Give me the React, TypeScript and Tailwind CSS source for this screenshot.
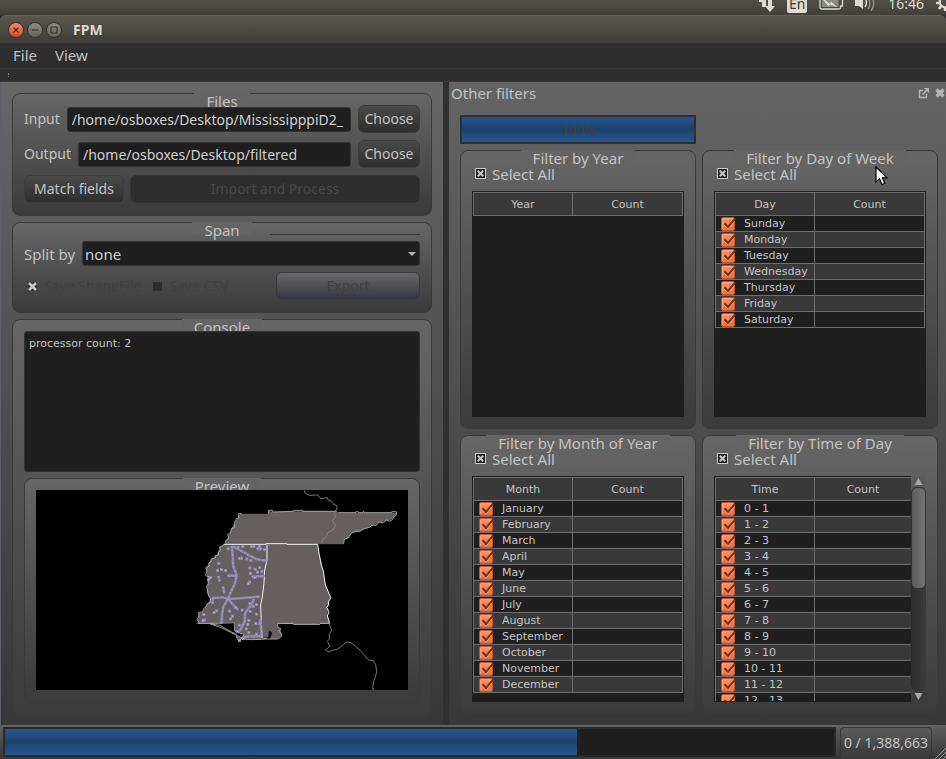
import React, { useId } from "react";
import type { ReactNode } from "react";

const DAYS = ["Sunday", "Monday", "Tuesday", "Wednesday", "Thursday", "Friday", "Saturday"];
const MONTHS = [
  "January", "February", "March", "April", "May", "June",
  "July", "August", "September", "October", "November", "December",
];
const HOURS = Array.from({ length: 13 }, (_, h) => `${h} - ${h + 1}`);

function Group({ title, className = "", children }: { title: string; className?: string; children: ReactNode }) {
  const id = useId();
  return (
    <section
      aria-labelledby={id}
      className={`flex min-w-0 flex-col rounded-lg border border-[#3a3a3a] bg-linear-to-b from-[#666666] to-[#3b3b3b] px-[11px] ${className}`}
    >
      <h2 id={id} className="-mt-px h-3 self-center bg-[#646464] px-3 text-[15px] leading-[17px] whitespace-nowrap">
        {title}
      </h2>
      {children}
    </section>
  );
}

const fieldClass =
  "h-[25px] min-w-0 flex-1 rounded-[3px] border border-[#343434] bg-[#1f1f1f] px-1 text-sm text-[#cfcfcf] outline-none";

function Button({ children, className = "", disabled = false }: { children: ReactNode; className?: string; disabled?: boolean }) {
  return (
    <button
      type="button"
      disabled={disabled}
      className={`h-7 rounded-md border text-sm leading-5 whitespace-nowrap ${className}`}
    >
      {children}
    </button>
  );
}

const raised = "border-[#3d3d3d] bg-linear-to-b from-[#4a4a48] to-[#2e2e2e]";

function PathRow({ label, value }: { label: string; value: string }) {
  const id = useId();
  return (
    <div className="flex h-7 items-center">
      <label htmlFor={id} className="mr-[7px] text-sm">{label}</label>
      <input id={id} type="text" defaultValue={value} className={fieldClass} />
      <Button className={`ml-[7px] w-[62px] ${raised}`}>Choose</Button>
    </div>
  );
}

function CrossMark({ className }: { className: string }) {
  return (
    <svg viewBox="0 0 9 9" className={`pointer-events-none [grid-area:1/1] ${className}`} aria-hidden="true">
      <path d="M1 1 L8 8 M8 1 L1 8" stroke="currentColor" strokeWidth="2.6" />
    </svg>
  );
}

function SelectAll() {
  return (
    <label className="flex h-[23px] items-center gap-[6px] pl-[3px] text-[15px] leading-4">
      <span className="grid place-items-center">
        <input
          type="checkbox"
          defaultChecked
          className="size-[11px] appearance-none border border-[#c8c8c8] bg-[#222222] [grid-area:1/1]"
        />
        <CrossMark className="size-[7px] text-[#c8c8c8]" />
      </span>
      Select All
    </label>
  );
}

function RowCheck({ label }: { label: string }) {
  return (
    <label className="flex h-[15px] items-center gap-[7px] pl-[5px]">
      <span className="grid items-center">
        <input
          type="checkbox"
          defaultChecked
          className="size-[14px] appearance-none rounded-[2px] border border-[#c9502a] bg-linear-to-b from-[#fb9166] to-[#ee6d3d] [grid-area:1/1]"
        />
        <svg viewBox="0 0 16 14" className="pointer-events-none h-[14px] w-4 [grid-area:1/1]" aria-hidden="true">
          <path d="M1.8 12.2V1.8H12" fill="none" stroke="#ffb08c" strokeWidth="0.8" />
          <path d="M3.4 7.8 L7 11.6 L13 4.6" fill="none" stroke="#ffc9ae" strokeWidth="1" />
          <path d="M3.4 6.2 L7 10 L14.2 1.6" fill="none" stroke="#74301a" strokeWidth="2" />
        </svg>
      </span>
      {label}
    </label>
  );
}

function FilterTable({ heading, rows, scroll = false }: { heading: string; rows: string[]; scroll?: boolean }) {
  return (
    <div className="mt-[6px] flex h-[226px]">
      <div className={`min-w-0 flex-1 overflow-hidden border border-[#1f1f1f] bg-[#1f1f1f] ${scroll ? "border-r-0" : ""}`}>
        <table className="w-full table-fixed border-collapse font-['DejaVu_Sans',sans-serif] text-[11px] leading-[15px] text-[#c4c4c4]">
          <colgroup>
            <col className="w-[99px]" />
            <col />
          </colgroup>
          <thead>
            <tr className="h-[23px] bg-[#393939]">
              <th className="border border-[#6e6e6e] p-0 font-normal">{heading}</th>
              <th className={`border border-[#6e6e6e] p-0 font-normal ${scroll ? "border-r-0" : ""}`}>Count</th>
            </tr>
          </thead>
          <tbody>
            {rows.map((row) => (
              <tr key={row} className="h-4 odd:bg-[#1f1f1f] even:bg-[#393939]">
                <td className="border border-[#6e6e6e] p-0"><RowCheck label={row} /></td>
                <td className={`border border-[#6e6e6e] p-0 ${scroll ? "border-r-0" : ""}`} />
              </tr>
            ))}
          </tbody>
        </table>
      </div>
      {scroll && (
        <div className="flex w-[15px] flex-col items-center bg-linear-to-b from-[#5c5c5c] to-[#3c3c3c]">
          <svg viewBox="0 0 15 11" className="h-[11px] w-full" aria-hidden="true"><path d="M3.5 9 L7.5 2 L11.5 9Z" fill="#a5a5a5" /></svg>
          <div className="flex w-full flex-1 flex-col rounded-md bg-linear-to-r from-[#2c2c2c] to-[#3c3c3c]">
            <div className="h-[102px] rounded-md border border-[#333333] bg-linear-to-r from-[#5c5c5c] to-[#747474]" />
          </div>
          <svg viewBox="0 0 15 11" className="h-[11px] w-full" aria-hidden="true"><path d="M3.5 2 L7.5 9 L11.5 2Z" fill="#a5a5a5" /></svg>
        </div>
      )}
    </div>
  );
}

function Filter({ title, heading, rows, scroll }: { title: string; heading: string; rows: string[]; scroll?: boolean }) {
  return (
    <Group title={title} className="pb-[11px]">
      <SelectAll />
      <FilterTable heading={heading} rows={rows} scroll={scroll} />
    </Group>
  );
}

const ROADS = [
  "M155 228 L158 255 L160 290 L170 315 L165 340 L153 365 L145 385 L130 410 L126 435 L124 462",
  "M160 230 L180 240 L205 255 L230 268 L262 273",
  "M98 384 L130 382 L145 387 L190 384 L240 380",
  "M145 387 L160 405 L175 420",
  "M222 388 L210 410 L196 428 L194 455 L178 485",
  "M142 317 L172 317", "M98 384 L98 402", "M115 318 L119 334", "M129 350 L133 370",
  "M215 320 L255 318", "M188 500 L245 498", "M241 448 L245 495",
];
const TOWNS = [
  [116, 280], [112, 301], [124, 298], [136, 301], [91, 322], [86, 328], [144, 236], [178, 265], [184, 264], [200, 266],
  [209, 293], [211, 310], [208, 336], [205, 340], [225, 297], [232, 306], [245, 304], [239, 292], [224, 322], [214, 229],
  [221, 229], [238, 229], [236, 237], [241, 236], [253, 238], [233, 235], [71, 433], [73, 449], [69, 451], [102, 427],
  [109, 422], [148, 423], [157, 438], [151, 446], [166, 412], [229, 403], [219, 409], [229, 432], [210, 424], [206, 451],
  [227, 460], [239, 459], [177, 465], [172, 484], [198, 476], [206, 487], [203, 463], [222, 498], [229, 492], [178, 511],
  [190, 505], [186, 420], [209, 400], [212, 271], [174, 232], [188, 229],
];

function MapPreview() {
  return (
    <svg viewBox="0 0 372 200" preserveAspectRatio="xMidYMid slice" className="h-[200px] w-full bg-black" role="img" aria-label="Map preview">
      <g transform="translate(144 -20) scale(0.33333)" fill="none" stroke="#b8b8b8" strokeWidth="3">
        <path fill="#655f5f" stroke="none" d="M180 131 H265 V122 L278 126 L340 124 H470 L475 128 H649 L647 138 L632 150 L596 158 L570 170 L540 184 L514 190 L506 203 L491 211 V223 H413 L420 260 L430 300 L437 345 L452 382 L443 412 L443 435 L449 460 L390 463 L340 463 L292 460 L292 470 L302 479 L305 497 L293 507 L270 508 L276 488 L268 482 L265 500 L248 505 L242 509 L200 508 L172 506 L163 481 L165 460 H53 L56 430 L68 426 L80 405 L91 388 L80 370 L83 330 L78 295 L92 270 L110 255 L120 230 L135 222 L146 195 L155 175 L168 153Z" />
        <path strokeWidth="2.5" d="M185 131 H175 L176 144 L168 146 L168 153 L163 156 L163 173 L155 175 L152 188 L143 193 L147 206 L138 211 L135 220 M265 131 V121 H278 V126 L340 124 V121 H368 V124 H470 M475 128 H528 V125 H535 V128 H549 V125 H552 V128 H635 V125 H649 V136 L642 140 L638 149 L628 154 L620 149 L610 159 L596 156 L590 165 L574 167 L569 172 L550 177 L540 184 L528 183 L514 190 L505 203 L493 208 L491 221" />
        <path stroke="#f2f2f2" d="M130 223 H258 V221 H321 V223 H413 L417 250 L425 290 L430 303 L436 345 L448 373 L453 384 L445 395 L446 405 L440 412 L447 426 L442 438 L449 460 M261 224 V270 L254 300 L252 340 L247 380 L242 405 L244 460 L246 504" />
        <path strokeWidth="2.5" d="M131 226 L119 231 L122 241 L115 246 L116 255 L105 257 L106 264 L93 267 L94 274 L86 280 L88 288 L77 293 L81 302 L77 317 L88 321 L83 329 L87 340 L80 348 L82 360 L87 378 L92 386 L90 399 L81 401 L78 411 L71 416 L68 425 L55 428 L58 438 L51 448 L57 458" />
        <path d="M52 460 H165 M292 460 H340 M340 463 H420 M420 460 H450" />
        <path fill="#000" strokeWidth="2.5" d="M90 462 L126 474 L170 496 L188 505 L192 493 L172 487 L163 482 L163 460" />
        <path strokeWidth="2.5" d="M94 462 L120 466 L155 486 L170 493 M168 498 L174 510 L185 506 L210 509 L245 508 L262 504 M248 507 H293 L304 500 V492 L296 482 L303 477 L293 471 V460" />
        <path stroke="#8d8d8d" strokeWidth="2.5" d="M373 61 L375 69 L387 76 L413 75 L423 87 L441 82 L444 90 L454 93 L459 101 L471 108 L471 117 L463 127 L467 142 L456 152 L466 164 L464 175 L452 184 L443 188 L438 202 L430 206 L424 220" />
        <path stroke="#8d8d8d" strokeWidth="2.5" d="M449 460 L449 466 L455 480 L448 493 L448 507 L442 514 L450 528 L442 536 L437 539 L445 546 L457 541 L472 538 L490 524 L500 516 L513 518 L527 529 L540 540 L551 553 L565 570 L580 572 L587 584 L590 604 L587 619 L581 634 L578 652 L581 662" />
        {ROADS.map((d) => <path key={d} d={d} stroke="#9088b4" strokeWidth="8" strokeDasharray="11 1" />)}
        {ROADS.map((d) => <path key={d} d={d} stroke="#b5aedd" strokeWidth="3" strokeDasharray="3 9" />)}
        {TOWNS.map(([x, y]) => (
          <g key={`${x}-${y}`} stroke="none">
            <rect x={x - 4} y={y - 4} width="9" height="9" fill="#9088b4" />
            <rect x={x - 1} y={y - 1} width="3" height="3" fill="#bdb6e6" />
          </g>
        ))}
      </g>
    </svg>
  );
}

function SystemBar() {
  return (
    <header className="flex h-[15px] items-start justify-end overflow-hidden bg-linear-to-b from-[#504f49] to-[#403f3a] text-[#dfdbd2]">
      <svg viewBox="0 0 16 12" className="mr-3 h-3 w-4" aria-hidden="true">
        <path d="M3 0H7V7H3Z M0 0H3V2H0Z M9 0H13V6H16L11 12L6 6H9Z" fill="currentColor" />
      </svg>
      <span className="mr-3 h-[13px] w-5 overflow-hidden rounded-b-[2px] bg-[#dfdbd2] text-center text-sm leading-[7px] text-[#3c3b37]">En</span>
      <svg viewBox="0 0 25 10" className="mr-[11px] h-[10px] w-[25px]" aria-hidden="true">
        <path d="M1 0V7.5Q1 9 2.5 9H20Q21.5 9 21.5 7.5V6H23.5V0" fill="none" stroke="currentColor" strokeWidth="1.3" />
        <path d="M3 0H19.5V7H3Z" fill="#8b8983" />
        <path d="M6 0L11 4L12 1.5L18 7L11 4.5L10 6.5L4 0Z" fill="currentColor" />
      </svg>
      <svg viewBox="0 0 21 12" className="mr-3 h-3 w-[21px]" aria-hidden="true">
        <path d="M0 0H4L8 0V9L4 6H0Z" fill="currentColor" />
        <path d="M10 7Q12 4 11 0" fill="none" stroke="currentColor" strokeWidth="1.5" />
        <path d="M13 9Q16 5 14 0 M16 11Q20 6 18 0" fill="none" stroke="#8f8d86" strokeWidth="1.4" />
      </svg>
      <span className="mr-3 text-sm leading-[7px]">16:46</span>
      <svg viewBox="0 0 10 12" className="h-3 w-[10px]" aria-hidden="true">
        <path d="M4 0Q3 7 10 7.5" fill="none" stroke="currentColor" strokeWidth="2.4" />
        <path d="M0 3H3 M3 9L5 6 M9 11V8" stroke="currentColor" strokeWidth="2.6" />
      </svg>
    </header>
  );
}

function WindowButton({ label, close = false, children }: { label: string; close?: boolean; children: ReactNode }) {
  return (
    <button
      type="button"
      aria-label={label}
      className={`grid size-4 place-items-center rounded-full border border-[#33322d] ${close ? "bg-linear-to-b from-[#f4845c] to-[#df4a16]" : "bg-linear-to-b from-[#8c8a83] to-[#66645e]"}`}
    >
      <svg viewBox="0 0 8 8" className="size-2" fill="none" stroke="#37332d" strokeWidth="1.2" aria-hidden="true">{children}</svg>
    </button>
  );
}

const blueChunk = "bg-linear-to-b from-[#25568f] via-[#1b426c] to-[#25568f]";

export default function App() {
  return (
    <div className="relative flex min-h-screen flex-col overflow-hidden bg-[#2e2e2e] font-['Noto_Sans','Liberation_Sans',sans-serif] text-sm text-[#c2c2c2]">
      <SystemBar />
      <div className="flex h-7 items-center gap-[3px] rounded-t-md border-t border-[#65635a] bg-linear-to-b from-[#58564d] to-[#3e3d38] pl-2">
        <WindowButton label="Close" close><path d="M1.5 1.5L6.5 6.5M6.5 1.5L1.5 6.5" /></WindowButton>
        <WindowButton label="Minimize"><path d="M0.5 4H7.5" /></WindowButton>
        <WindowButton label="Maximize"><path d="M1 1H7V7H1Z" /></WindowButton>
        <h1 className="ml-2 text-sm font-bold text-[#dfdbd2]">FPM</h1>
      </div>
      <nav className="flex h-[26px] items-center gap-[18px] border-b border-[#3a3a3a] pl-[13px] text-[15px]">
        <button type="button">File</button>
        <button type="button">View</button>
      </nav>
      <div className="flex h-[13px] items-center border-b border-[#3a3a3a] pl-2">
        <span className="h-1 border-l border-dotted border-[#777777]" />
      </div>

      <div className="grid flex-1 grid-cols-[443fr_6px_497fr]">
        <main className="flex min-w-0 flex-col gap-[6px] border-l border-[#5e6068] bg-linear-to-b from-[#666666] to-[#383838] px-[11px] pt-[11px] pb-2">
          <Group title="Files" className="pb-3">
            <div className="flex flex-col gap-[7px]">
              <PathRow label="Input" value="/home/osboxes/Desktop/MississipppiD2_" />
              <PathRow label="Output" value="/home/osboxes/Desktop/filtered" />
              <div className="flex gap-[6px]">
                <Button className={`w-[100px] ${raised}`}>Match fields</Button>
                <Button disabled className="flex-1 border-[#363636] bg-[#2e2e2e] text-[#484848]">Import and Process</Button>
              </div>
            </div>
          </Group>

          <Group title="Span" className="pb-3">
            <hr className="ml-auto w-[38%] border-[#3a3a3a]" />
            <div className="mt-[6px] flex items-center gap-[7px]">
              <label htmlFor="split" className="text-[15px] leading-5">Split by</label>
              <div className="grid min-w-0 flex-1 items-center">
                <select id="split" className="h-[25px] w-full appearance-none rounded-[3px] border border-[#343434] bg-[#1f1f1f] px-[2px] text-[15px] leading-5 text-[#cfcfcf] [grid-area:1/1]">
                  <option>none</option>
                </select>
                <svg viewBox="0 0 8 4" className="pointer-events-none mr-1 h-1 w-2 justify-self-end [grid-area:1/1]" aria-hidden="true"><path d="M0 0H8L4 4Z" fill="#b5b5b5" /></svg>
              </div>
            </div>
            <div className="mt-[6px] flex items-center text-[#414141]">
              <label className="flex items-center gap-[7px] pl-1">
                <span className="grid place-items-center">
                  <input type="checkbox" defaultChecked disabled className="size-[9px] appearance-none bg-[#2e2e2e] [grid-area:1/1]" />
                  <CrossMark className="size-[9px] text-[#c8c8c8]" />
                </span>
                Save ShapeFile
              </label>
              <label className="ml-3 flex items-center gap-[7px]">
                <input type="checkbox" disabled className="size-[9px] appearance-none bg-[#2e2e2e]" />
                Save CSV
              </label>
              <Button disabled className="ml-auto w-36 border-[#3a3a3a] bg-linear-to-b from-[#6a6a6b] via-[#4f4f52] to-[#353540] text-[#414141]">Export</Button>
            </div>
          </Group>

          <Group title="Console" className="flex-1 pb-3">
            <textarea
              readOnly
              aria-label="Console output"
              defaultValue="processor count: 2"
              className="h-[141px] shrink-0 resize-none rounded-[3px] border border-[#343434] bg-[#1f1f1f] px-1 py-1 font-['DejaVu_Sans',sans-serif] text-[11px] leading-[15px] text-[#c4c4c4] outline-none"
            />
            <Group title="Preview" className="mt-[6px] flex-1 pb-3">
              <MapPreview />
            </Group>
          </Group>
        </main>

        <div className="bg-[#303030]" />

        <aside className="flex min-w-0 flex-col bg-linear-to-b from-[#646464] to-[#383838]">
          <div className="flex h-[22px] items-center gap-[6px] pr-[1px] pl-[2px]">
            <h2 className="flex-1 text-[15px] leading-[22px]">Other filters</h2>
            <button type="button" aria-label="Float panel">
              <svg viewBox="0 0 11 11" className="size-[11px]" fill="none" stroke="#b5b5b5" strokeWidth="1.5" aria-hidden="true">
                <path d="M5 2.5H1.5V9.5H8.5V6 M4.5 6.5L9 2" /><path d="M6 0H11V5Z" fill="#b5b5b5" stroke="none" />
              </svg>
            </button>
            <button type="button" aria-label="Close panel">
              <svg viewBox="0 0 10 10" className="size-[10px]" stroke="#b5b5b5" strokeWidth="3.4" aria-hidden="true"><path d="M1.5 1.5L8.5 8.5M8.5 1.5L1.5 8.5" /></svg>
            </button>
          </div>
          <div className="grid grid-cols-2 gap-[6px] pt-[11px] pr-2 pb-[10px] pl-[11px]">
            <div role="progressbar" aria-valuenow={100} aria-label="Filter progress" className={`col-start-1 flex h-[29px] items-center justify-center border-2 border-[#303030] text-[#404040] ${blueChunk}`}>
              100%
            </div>
            <div className="col-start-1 min-w-0"><Filter title="Filter by Year" heading="Year" rows={[]} /></div>
            <div className="min-w-0"><Filter title="Filter by Day of Week" heading="Day" rows={DAYS} /></div>
            <div className="min-w-0"><Filter title="Filter by Month of Year" heading="Month" rows={MONTHS} /></div>
            <div className="min-w-0"><Filter title="Filter by Time of Day" heading="Time" rows={HOURS} scroll /></div>
          </div>
        </aside>
      </div>

      <footer className="flex h-[34px] items-stretch border-t-2 border-[#636363] bg-linear-to-b from-[#5c5c5c] to-[#383838]">
        <div role="progressbar" aria-label="Processing progress" className="mb-[2px] ml-[3px] flex flex-1 border-2 border-[#2a2a2a] bg-[#1f1f1f]">
          <div className={`w-[69%] ${blueChunk}`} />
        </div>
        <output className="ml-1 rounded-t-[4px] border border-b-0 border-[#363636] px-[3px] text-sm leading-[30px]">0 / 1,388,663</output>
        <svg viewBox="0 0 12 12" className="ml-[2px] size-3 self-end" stroke="#9a9a9a" strokeWidth="1" aria-hidden="true"><path d="M1 12L12 1M5 12L12 5M9 12L12 9" /></svg>
      </footer>

      <svg viewBox="0 0 13 20" className="pointer-events-none absolute top-[166px] left-[875px] h-5 w-[13px]" aria-hidden="true">
        <path d="M1 1V16L4.5 12.8L7 18.5L9.8 17.2L7.4 11.8H12Z" fill="#fff" stroke="#000" strokeWidth="1.2" />
      </svg>
    </div>
  );
}
